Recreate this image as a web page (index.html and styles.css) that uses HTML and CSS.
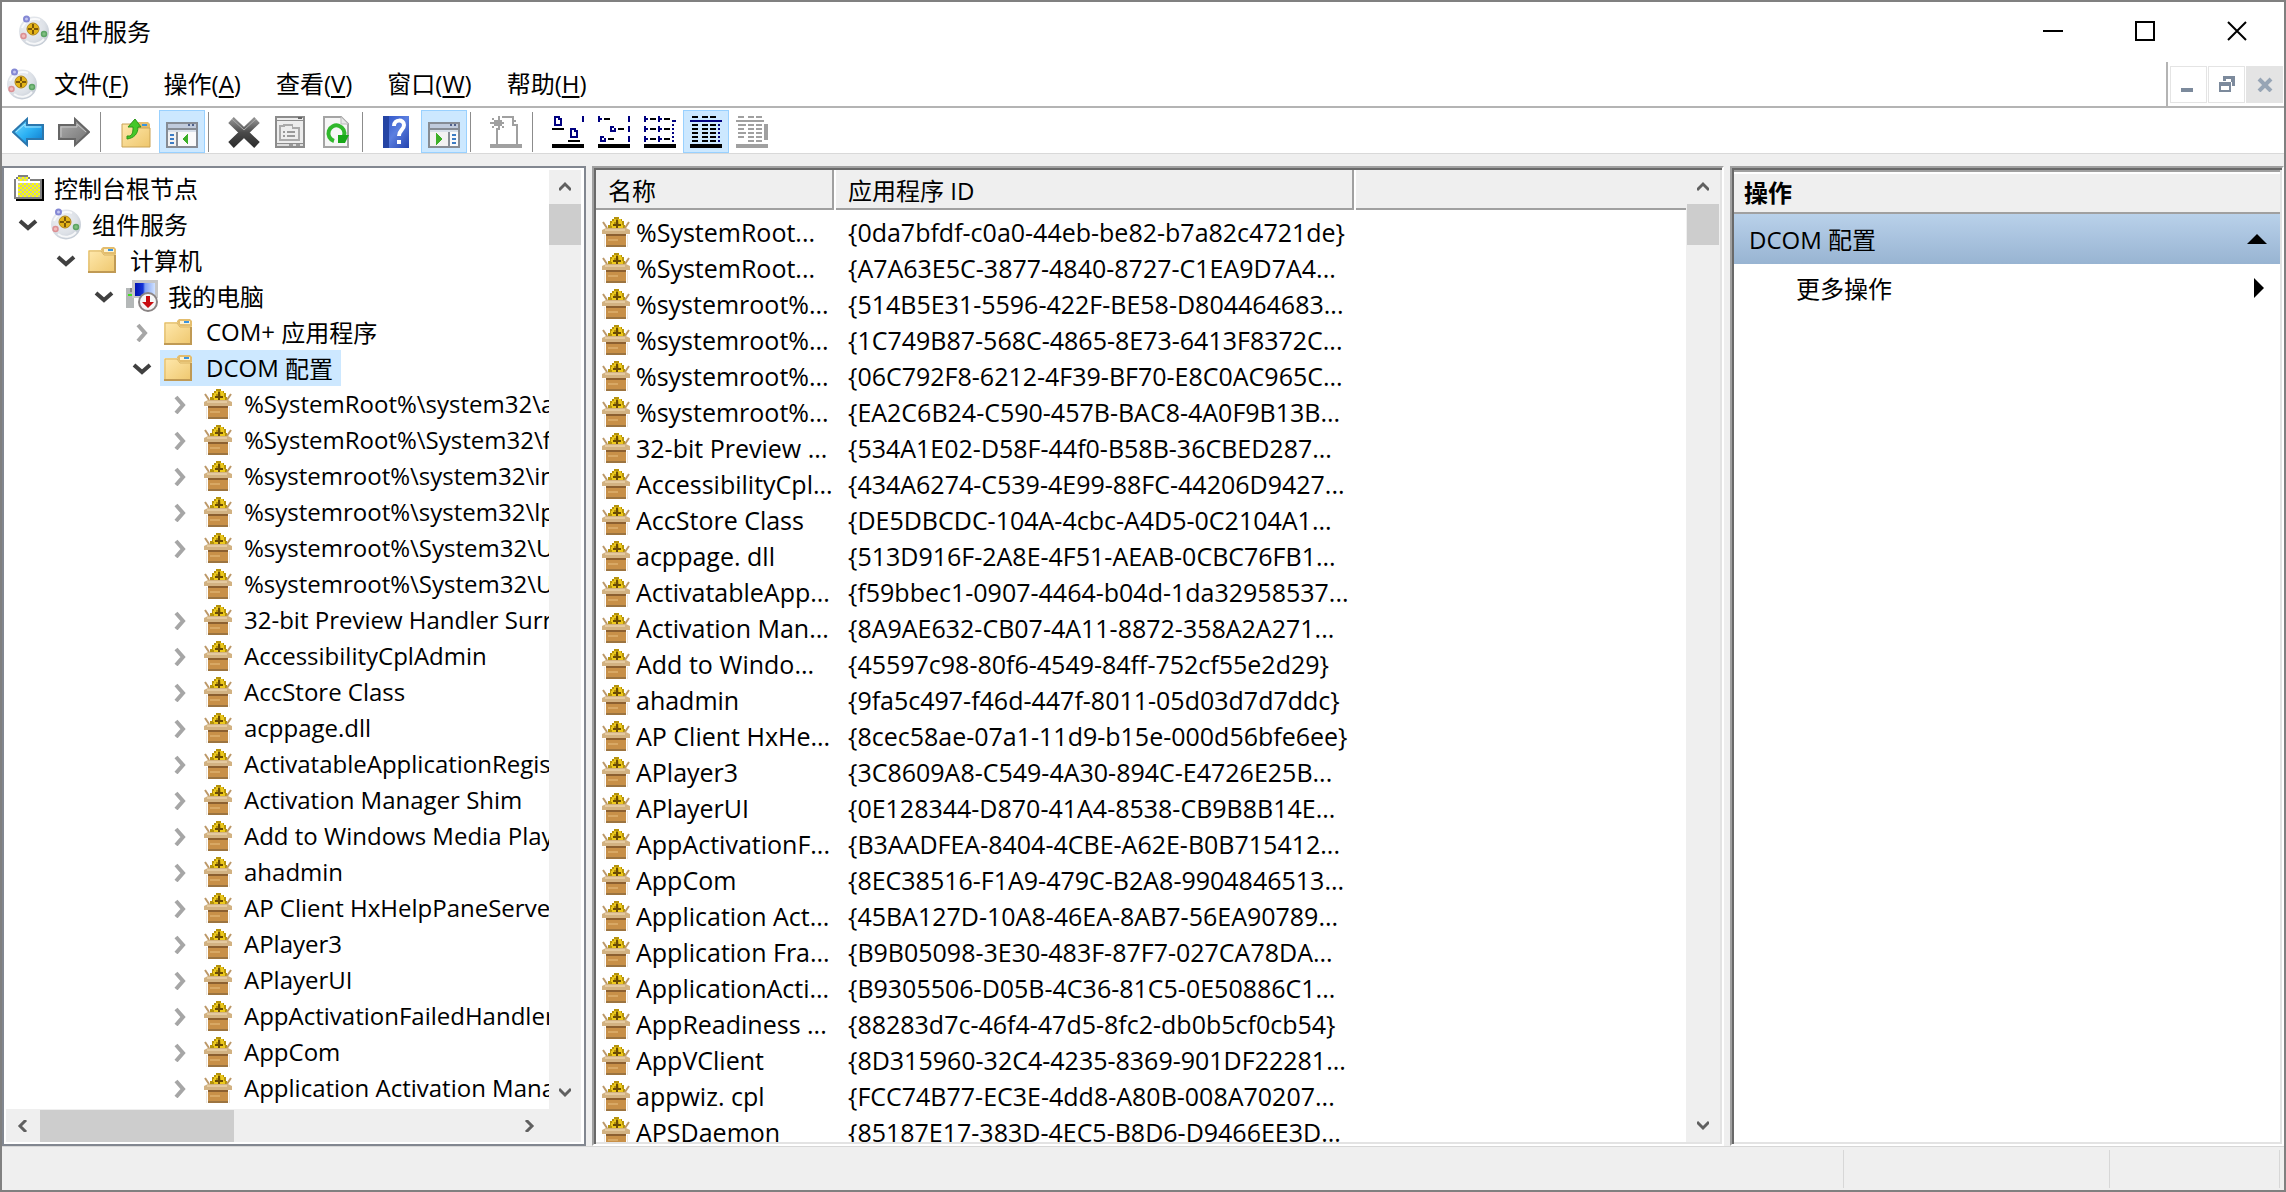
FILE: index.html
```
<!DOCTYPE html>
<html lang="zh-CN">
<head>
<meta charset="utf-8">
<title>组件服务</title>
<link rel="stylesheet" href="styles.css">
</head>
<body>
<svg class="sprite" aria-hidden="true">
  <defs>
    <radialGradient id="disc" cx="40%" cy="35%" r="65%"><stop offset="0" stop-color="#f0f2f5"/><stop offset="0.7" stop-color="#dde1e7"/><stop offset="1" stop-color="#c6cdd6"/></radialGradient>
    <linearGradient id="blue" x1="0" y1="0" x2="1" y2="1"><stop offset="0" stop-color="#7fdcff"/><stop offset="0.5" stop-color="#2db2f4"/><stop offset="1" stop-color="#0b74c8"/></linearGradient>
    <linearGradient id="gray" x1="0" y1="0" x2="1" y2="1"><stop offset="0" stop-color="#b0b0b0"/><stop offset="1" stop-color="#707070"/></linearGradient>
    <linearGradient id="manila" x1="0" y1="0" x2="1" y2="1"><stop offset="0" stop-color="#ffe9ae"/><stop offset="1" stop-color="#eec66c"/></linearGradient>
    <linearGradient id="cross" x1="0" y1="0" x2="0" y2="1"><stop offset="0" stop-color="#8d8d8d"/><stop offset="0.5" stop-color="#4a4a4a"/><stop offset="1" stop-color="#303030"/></linearGradient>
    <linearGradient id="help" x1="0" y1="0" x2="1" y2="1"><stop offset="0" stop-color="#2a4fc4"/><stop offset="0.5" stop-color="#5b7fe0"/><stop offset="1" stop-color="#2443ae"/></linearGradient>
    <linearGradient id="screen" x1="0" y1="0" x2="1" y2="0"><stop offset="0" stop-color="#0010b0"/><stop offset="0.4" stop-color="#1434d8"/><stop offset="0.5" stop-color="#7f9ff4"/><stop offset="1" stop-color="#d0e2ff"/></linearGradient>
    <pattern id="dither" width="4" height="4" patternUnits="userSpaceOnUse"><path d="M0 0h4v4H0z" fill="#ff0"/><path d="M0 0h2v2H0zM2 2h2v2H2z" fill="#c8c8a0"/></pattern>
  </defs>
  <symbol id="component" viewBox="0 0 32 32">
    <circle cx="16" cy="16.500" r="15" fill="url(#disc)"/>
    <path d="M4 13a14 14 0 0 1 18-8M26 24a13 13 0 0 1-18 2" fill="none" stroke="#fff" stroke-width="2" opacity=".8"/>
    <circle cx="8.500" cy="4" r="2.500" fill="#c4c6f0" stroke="#8488d4" stroke-width="2"/>
    <circle cx="5.500" cy="21" r="2.500" fill="#f0bcbc" stroke="#dc9094" stroke-width="1.500"/>
    <circle cx="26" cy="19" r="2.500" fill="#7fbf80" stroke="#5ca464" stroke-width="1.500"/>
    <circle cx="15" cy="14" r="6" fill="#e4b418" stroke="#b0861c"/>
    <path d="M15 9v4M15 15v4M10 14h4M16 14h4" stroke="#7c5808" stroke-width="2"/>
  </symbol>
  <symbol id="box" viewBox="0 0 28 30">
    <path d="M6 12V8h2V4h2V2h2V0h5v2h3v2h2v4h1v4z" fill="#b4920c"/>
    <path d="M10 4h2V2h2v3h-2v3h2v4h-4V9H9V6h1zM16 2h3v2h1v4h-3zM15 8h6v4h-6z" fill="#ecc81c"/>
    <path d="M14 3h2v4h3v2h-3v2h-2V9h-3V7h3z" fill="#6a4c04"/>
    <path d="M1 5l4 6M27 5l-4 6" stroke="#bc9868" stroke-width="2" fill="none"/>
    <path d="M4 11h20l4 2v4H0v-4z" fill="#d2b282"/>
    <path d="M3 12h20v2H3z" fill="#e4caa0"/>
    <path d="M4 18h20v12H4z" fill="#c89048"/>
    <path d="M4 17h20v2H4z" fill="#8c6030"/>
    <path d="M6 22h10v2H6z" fill="#d8a864"/>
    <path d="M4 28h20v2H4z" fill="#9c7440"/>
    <path d="M25 18h1v12h-1zM2 18h1v12H2z" fill="#ece6dc"/>
  </symbol>
  <symbol id="folder" viewBox="0 0 28 26">
    <path d="M13 6V2l2-2h11l2 2v8H13z" fill="#e3bd6e"/>
    <path d="M16 2h10v3H16z" fill="#fff3d0"/><path d="M20 2h5v2h-5z" fill="#3a94e0"/>
    <path d="M0 3h13l3 4h12v19H0z" fill="url(#manila)"/>
    <path d="M1 25V4h12l3 4h11" fill="none" stroke="#d9b465"/>
    <path d="M0 24h28v2H0zM26 8h2v18h-2z" fill="#c09a54"/>
  </symbol>
  <symbol id="root-folder" viewBox="0 0 30 26">
    <path d="M2 4h28v22H2z" fill="#000"/>
    <path d="M0 4h2V2h2V0h10v2h2v2h12v20H0z" fill="#808080"/>
    <path d="M2 4h2V2h10v2h2v2h10v16H2z" fill="#fff"/>
    <path d="M4 4V2h10v4H4zM4 8h22v14H4z" fill="url(#dither)"/>
  </symbol>
  <symbol id="computer" viewBox="0 0 32 32">
    <path d="M0 8h8v20H0z" fill="#b4b8b8"/><path d="M2 14h5v2H2z" fill="#40e020"/><path d="M4 8h3v4H4z" fill="#888"/>
    <path d="M6 0h26v18H6z" fill="#c6c6c6"/><path d="M9 3h20v13H9z" fill="url(#screen)"/>
    <circle cx="22" cy="22" r="9" fill="#f6f6f6" stroke="#8a8484" stroke-width="2"/>
    <path d="M20 16h4v6h4l-6 6-6-6h4z" fill="#c80c10"/>
  </symbol>
  <symbol id="open" viewBox="0 0 20 20"><path d="M2 7l8 7 8-7" fill="none" stroke="#404040" stroke-width="4"/></symbol>
  <symbol id="closed" viewBox="0 0 20 20"><path d="M6 3l7 8-7 8" fill="none" stroke="#a6a6a6" stroke-width="4"/></symbol>
  <symbol id="arrow" viewBox="0 0 12 12"><path d="M0 9l6-6 6 6" fill="none" stroke="#606060" stroke-width="3"/></symbol>
</svg>

<div class="window">
  <header class="titlebar">
    <svg class="app-icon"><use href="#component"/></svg>
    <h1>组件服务</h1>
    <div class="window-buttons">
      <button aria-label="最小化"><svg viewBox="0 0 20 20"><path d="M0 10h20" stroke="#000" stroke-width="2"/></svg></button>
      <button aria-label="最大化"><svg viewBox="0 0 20 20"><path d="M1 1h18v18H1z" fill="none" stroke="#000" stroke-width="2"/></svg></button>
      <button aria-label="关闭"><svg viewBox="0 0 20 20"><path d="M1 1l18 18M19 1L1 19" stroke="#000" stroke-width="2"/></svg></button>
    </div>
  </header>

  <div class="menubar">
    <svg class="app-icon"><use href="#component"/></svg>
    <nav class="menus">
      <button>文件<span class="latin">(<u>F</u>)</span></button>
      <button>操作<span class="latin">(<u>A</u>)</span></button>
      <button>查看<span class="latin">(<u>V</u>)</span></button>
      <button>窗口<span class="latin">(<u>W</u>)</span></button>
      <button>帮助<span class="latin">(<u>H</u>)</span></button>
    </nav>
    <div class="child-buttons">
      <button aria-label="最小化子窗口"><svg viewBox="0 0 16 16"><path d="M0 12h12v4H0z" fill="#7c8a9c"/></svg></button>
      <button aria-label="还原子窗口"><svg viewBox="0 0 16 16"><path d="M4 0h12v10h-3V6h-1V3H7v2H4z" fill="#7c8a9c"/><path d="M0 6h12v10H0zM2 10v4h8v-4z" fill="#7c8a9c" fill-rule="evenodd"/></svg></button>
      <button class="disabled" aria-label="关闭子窗口"><svg viewBox="0 0 16 16"><path d="M2 3l12 12M14 3L2 15" stroke="#97a5b5" stroke-width="4"/></svg></button>
    </div>
  </div>

  <div class="toolbar" role="toolbar">
    <button aria-label="后退"><svg viewBox="0 0 32 32"><path d="M1 16L15 3v6h16v14H15v6z" fill="url(#blue)" stroke="#2b77ae" stroke-width="2"/><path d="M4 16l9-8v3h16" fill="none" stroke="#a8e6ff"/></svg></button>
    <button aria-label="前进"><svg viewBox="0 0 32 32"><path d="M31 16L17 3v6H1v14h16v6z" fill="url(#gray)" stroke="#666" stroke-width="2"/><path d="M28 16l-9-8v3H3v10" fill="none" stroke="#c6c6c6"/></svg></button>
    <span class="separator"></span>
    <button aria-label="向上一级"><svg viewBox="0 0 32 32"><path d="M18 10V6h10l2 2v8H18z" fill="#e3bd6e"/><path d="M22 8h5v2h-5z" fill="#3a94e0"/><path d="M2 8h14l3 4h11v19H2z" fill="url(#manila)" stroke="#c9a255"/><path d="M7 23v-3h3c3-2 3-5 3-9H8L15 3l6 8h-3c0 7-4 11-11 12z" fill="#44c828" stroke="#2c9418"/></svg></button>
    <button class="active" aria-label="显示控制台树"><svg viewBox="0 0 32 32" class="crisp"><path d="M0 6h32v26H0z" fill="#868c94"/><path d="M2 8h28v4H2z" fill="#c0cbdc"/><path d="M2 14h28v2H2z" fill="#d8e0ea"/><path d="M22 8h2v2h-2zM26 8h2v2h-2z" fill="#50628c"/><path d="M2 16h8v14H2z" fill="#f2f2f2"/><path d="M12 16h18v14H12z" fill="#fafafa"/><path d="M4 18h4v2H4zM4 22h4v2H4zM4 26h4v2H4z" fill="#3c7cc4"/><path d="M22 17v12l-6-6z" fill="#3cb028"/></svg></button>
    <span class="separator"></span>
    <button aria-label="删除"><svg viewBox="0 0 32 32"><path d="M3 4l26 25M29 4L3 29" stroke="url(#cross)" stroke-width="8"/><path d="M4 3l12 11L28 3" fill="none" stroke="#aaa"/></svg></button>
    <button aria-label="属性"><svg viewBox="0 0 32 32" class="crisp"><path d="M1 0h30v32H1z" fill="#8c8c8c"/><path d="M3 2h26v2H3zM3 5h26v22H3z" fill="#ededed"/><path d="M24 1h4v2h-4z" fill="#666"/><path d="M3 28h26v2H3z" fill="#ddd"/><path d="M15 28h4v2h-4zM22 28h4v2h-4z" fill="#999"/><path d="M5 9h4V8h10v3h7v14H5zM7 11v12h17V13h-6v-3h-7v1z" fill="#aaa" fill-rule="evenodd"/><path d="M9 15h2v2H9zM13 15h8v2h-8zM9 19h2v2H9zM13 19h8v2h-8z" fill="#999"/></svg></button>
    <button aria-label="刷新"><svg viewBox="0 0 32 32"><path d="M4 1h17l7 7v23H4z" fill="#f6f6f6" stroke="#a4a4a4" stroke-width="2"/><path d="M21 1v7h7" fill="#e8e8e8" stroke="#bbb"/><path d="M14 25a8 8 0 1 1 10-5" fill="none" stroke="#30b82c" stroke-width="4"/><path d="M18 19h11l-4 8h-7z" fill="#18a818"/></svg></button>
    <span class="separator"></span>
    <button aria-label="帮助"><svg viewBox="0 0 32 32"><path d="M1 0h26v32H1z" fill="url(#help)"/><path d="M1 0h6v32H1z" fill="#2444a4"/><path d="M12 10c0-7 10-7 10-1 0 5-5 5-5 11" fill="none" stroke="#fff" stroke-width="4"/><path d="M15 24h4v4h-4z" fill="#fff"/></svg></button>
    <button class="active" aria-label="显示操作窗格"><svg viewBox="0 0 32 32" class="crisp"><path d="M0 6h32v26H0z" fill="#868c94"/><path d="M2 8h28v4H2z" fill="#c0cbdc"/><path d="M2 14h28v2H2z" fill="#d8e0ea"/><path d="M22 8h2v2h-2zM26 8h2v2h-2z" fill="#50628c"/><path d="M2 16h18v14H2z" fill="#f2f2f2"/><path d="M22 16h8v14h-8z" fill="#fafafa"/><path d="M24 18h4v2h-4zM24 22h4v2h-4zM24 26h4v2h-4z" fill="#3c7cc4"/><path d="M8 17v12l6-6z" fill="#3cb028"/></svg></button>
    <span class="separator"></span>
    <button aria-label="新建窗口"><svg viewBox="0 0 16 16" class="crisp"><path d="M0 14h16v2H0zM3 6h1v8H3zM13 4h1v10h-1zM6 0h6v1H6zM11 1h1v3h2v1h-3zM12 2h1v1h-1zM1 1h1v1H1zM4 0h1v2H4zM2 2h4v3H2zM0 3h7v1H0zM1 5h1v1H1zM4 5h1v2H4zM6 5h1v1H6z" fill="#a0a0a0"/></svg></button>
    <span class="separator"></span>
    <button aria-label="大图标"><svg viewBox="0 0 16 16" class="crisp"><path d="M1 0h3v1h1v4H1zM2 1v3h2V2H3V1zM9 6h3v1h1v4H9zM10 7v3h2V8h-1V7zM15 0h1v3h-1z" fill="#000080" fill-rule="evenodd"/><path d="M0 6h6v1H0zM8 12h6v1H8zM0 14h16v2H0z"/></svg></button>
    <button aria-label="小图标"><svg viewBox="0 0 16 16" class="crisp"><path d="M0 0h1v1h1v1H1v1H0zM6 5h2v1h1v2H6zM7 6v1h1V6zM1 10h2v1h1v2H1zM2 11v1h1v-1zM15 0h1v3h-1zM15 5h1v3h-1zM15 10h1v3h-1z" fill="#000080" fill-rule="evenodd"/><path d="M3 1h3v1H3zM10 6h3v1h-3zM5 11h3v1H5zM0 14h16v2H0z"/></svg></button>
    <button aria-label="列表"><svg viewBox="0 0 16 16" class="crisp"><path d="M0 0h1v1h1v1H1v1H0zM0 5h1v1h1v1H1v1H0zM0 10h1v1h1v1H1v1H0zM7 0h1v1h1v1H8v1H7zM7 5h1v1h1v1H8v1H7zM7 10h1v1h1v1H8v1H7zM14 2h2v1h-2zM14 4h1v1h-1zM14 6h1v1h-1zM14 8h1v1h-1zM14 10h1v1h-1zM14 12h1v1h-1z" fill="#000080"/><path d="M3 1h3v1H3zM10 1h3v1h-3zM3 6h3v1H3zM10 6h3v1h-3zM3 11h3v1H3zM10 11h3v1h-3zM0 14h16v2H0z"/></svg></button>
    <button class="active" aria-label="详细信息"><svg viewBox="0 0 16 16" class="crisp"><path d="M0 2h16v1H0zM14 4h1v1h-1zM14 6h1v1h-1zM14 8h1v1h-1zM14 10h1v1h-1zM14 12h1v1h-1z" fill="#000080"/><path d="M2.500 0v1M7.500 0v1M11.500 0v1M2.500 4v9M7.500 4v9M11.500 4v9" stroke="#000" stroke-width="3" stroke-dasharray="1 1"/><path d="M0 14h16v2H0z"/></svg></button>
    <button aria-label="筛选列表"><svg viewBox="0 0 16 16" class="crisp"><path d="M0 2h14v1H0zM14 4h2v8h-2zM0 14h16v2H0zM1 4h4v1H1zM1 6h3v1H1zM1 8h4v1H1zM1 10h3v1H1z" fill="#a0a0a0"/><path d="M2.500 0v1M7.500 0v1M11.500 0v1M7.500 4v9M11.500 4v9" stroke="#a0a0a0" stroke-width="3" stroke-dasharray="1 1"/></svg></button>
  </div>

  <main class="panes">
    <section class="tree-pane" aria-label="控制台树">
      <div class="tree latin">
        <div class="row"><span class="label"><span class="slot"><svg class="wide"><use href="#root-folder"/></svg></span><span class="han">控制台根节点</span></span></div>
        <ul>
          <li><div class="row"><button class="toggle" aria-label="折叠"><svg><use href="#open"/></svg></button><span class="label"><span class="slot"><svg class="big"><use href="#component"/></svg></span><span class="han">组件服务</span></span></div>
          <ul>
            <li><div class="row"><button class="toggle" aria-label="折叠"><svg><use href="#open"/></svg></button><span class="label"><span class="slot"><svg class="folder"><use href="#folder"/></svg></span><span class="han">计算机</span></span></div>
            <ul>
              <li><div class="row"><button class="toggle" aria-label="折叠"><svg><use href="#open"/></svg></button><span class="label"><span class="slot"><svg class="big"><use href="#computer"/></svg></span><span class="han">我的电脑</span></span></div>
              <ul>
                <li><div class="row"><button class="toggle" aria-label="展开"><svg><use href="#closed"/></svg></button><span class="label"><span class="slot"><svg class="folder"><use href="#folder"/></svg></span>COM+ <span class="han">应用程序</span></span></div></li>
                <li><div class="row"><button class="toggle" aria-label="折叠"><svg><use href="#open"/></svg></button><span class="label selected"><span class="slot"><svg class="folder"><use href="#folder"/></svg></span>DCOM <span class="han">配置</span></span></div>
                <ul>
                  <li class="row"><button class="toggle" aria-label="展开"><svg><use href="#closed"/></svg></button><span class="label"><span class="slot"><svg class="box"><use href="#box"/></svg></span>%SystemRoot%\system32\a</span></li>
                  <li class="row"><button class="toggle" aria-label="展开"><svg><use href="#closed"/></svg></button><span class="label"><span class="slot"><svg class="box"><use href="#box"/></svg></span>%SystemRoot%\System32\f</span></li>
                  <li class="row"><button class="toggle" aria-label="展开"><svg><use href="#closed"/></svg></button><span class="label"><span class="slot"><svg class="box"><use href="#box"/></svg></span>%systemroot%\system32\in</span></li>
                  <li class="row"><button class="toggle" aria-label="展开"><svg><use href="#closed"/></svg></button><span class="label"><span class="slot"><svg class="box"><use href="#box"/></svg></span>%systemroot%\system32\lp</span></li>
                  <li class="row"><button class="toggle" aria-label="展开"><svg><use href="#closed"/></svg></button><span class="label"><span class="slot"><svg class="box"><use href="#box"/></svg></span>%systemroot%\System32\U</span></li>
                  <li class="row"><span class="toggle"></span><span class="label"><span class="slot"><svg class="box"><use href="#box"/></svg></span>%systemroot%\System32\U</span></li>
                  <li class="row"><button class="toggle" aria-label="展开"><svg><use href="#closed"/></svg></button><span class="label"><span class="slot"><svg class="box"><use href="#box"/></svg></span>32-bit Preview Handler Surro</span></li>
                  <li class="row"><button class="toggle" aria-label="展开"><svg><use href="#closed"/></svg></button><span class="label"><span class="slot"><svg class="box"><use href="#box"/></svg></span>AccessibilityCplAdmin</span></li>
                  <li class="row"><button class="toggle" aria-label="展开"><svg><use href="#closed"/></svg></button><span class="label"><span class="slot"><svg class="box"><use href="#box"/></svg></span>AccStore Class</span></li>
                  <li class="row"><button class="toggle" aria-label="展开"><svg><use href="#closed"/></svg></button><span class="label"><span class="slot"><svg class="box"><use href="#box"/></svg></span>acppage.dll</span></li>
                  <li class="row"><button class="toggle" aria-label="展开"><svg><use href="#closed"/></svg></button><span class="label"><span class="slot"><svg class="box"><use href="#box"/></svg></span>ActivatableApplicationRegist</span></li>
                  <li class="row"><button class="toggle" aria-label="展开"><svg><use href="#closed"/></svg></button><span class="label"><span class="slot"><svg class="box"><use href="#box"/></svg></span>Activation Manager Shim</span></li>
                  <li class="row"><button class="toggle" aria-label="展开"><svg><use href="#closed"/></svg></button><span class="label"><span class="slot"><svg class="box"><use href="#box"/></svg></span>Add to Windows Media Playe</span></li>
                  <li class="row"><button class="toggle" aria-label="展开"><svg><use href="#closed"/></svg></button><span class="label"><span class="slot"><svg class="box"><use href="#box"/></svg></span>ahadmin</span></li>
                  <li class="row"><button class="toggle" aria-label="展开"><svg><use href="#closed"/></svg></button><span class="label"><span class="slot"><svg class="box"><use href="#box"/></svg></span>AP Client HxHelpPaneServe</span></li>
                  <li class="row"><button class="toggle" aria-label="展开"><svg><use href="#closed"/></svg></button><span class="label"><span class="slot"><svg class="box"><use href="#box"/></svg></span>APlayer3</span></li>
                  <li class="row"><button class="toggle" aria-label="展开"><svg><use href="#closed"/></svg></button><span class="label"><span class="slot"><svg class="box"><use href="#box"/></svg></span>APlayerUI</span></li>
                  <li class="row"><button class="toggle" aria-label="展开"><svg><use href="#closed"/></svg></button><span class="label"><span class="slot"><svg class="box"><use href="#box"/></svg></span>AppActivationFailedHandler</span></li>
                  <li class="row"><button class="toggle" aria-label="展开"><svg><use href="#closed"/></svg></button><span class="label"><span class="slot"><svg class="box"><use href="#box"/></svg></span>AppCom</span></li>
                  <li class="row"><button class="toggle" aria-label="展开"><svg><use href="#closed"/></svg></button><span class="label"><span class="slot"><svg class="box"><use href="#box"/></svg></span>Application Activation Manag</span></li>
                </ul></li>
              </ul></li>
            </ul></li>
          </ul></li>
        </ul>
      </div>
      <div class="vscroll"><svg class="up"><use href="#arrow"/></svg><span class="thumb"></span><svg class="down"><use href="#arrow"/></svg></div>
      <div class="hscroll"><svg class="left"><use href="#arrow"/></svg><span class="thumb"></span><svg class="right"><use href="#arrow"/></svg></div>
    </section>

    <section class="list-pane sunken" aria-label="DCOM 配置">
      <div class="list">
        <table>
          <colgroup><col class="col-name"><col class="col-id"><col></colgroup>
          <thead><tr><th><div>名称</div></th><th><div>应用程序<span class="latin"> ID</span></div></th><th><div class="last"></div></th></tr></thead>
          <tbody>
            <tr><td><svg class="box"><use href="#box"/></svg>%SystemRoot...</td><td>{0da7bfdf-c0a0-44eb-be82-b7a82c4721de}</td><td></td></tr>
            <tr><td><svg class="box"><use href="#box"/></svg>%SystemRoot...</td><td>{A7A63E5C-3877-4840-8727-C1EA9D7A4...</td><td></td></tr>
            <tr><td><svg class="box"><use href="#box"/></svg>%systemroot%...</td><td>{514B5E31-5596-422F-BE58-D804464683...</td><td></td></tr>
            <tr><td><svg class="box"><use href="#box"/></svg>%systemroot%...</td><td>{1C749B87-568C-4865-8E73-6413F8372C...</td><td></td></tr>
            <tr><td><svg class="box"><use href="#box"/></svg>%systemroot%...</td><td>{06C792F8-6212-4F39-BF70-E8C0AC965C...</td><td></td></tr>
            <tr><td><svg class="box"><use href="#box"/></svg>%systemroot%...</td><td>{EA2C6B24-C590-457B-BAC8-4A0F9B13B...</td><td></td></tr>
            <tr><td><svg class="box"><use href="#box"/></svg>32-bit Preview ...</td><td>{534A1E02-D58F-44f0-B58B-36CBED287...</td><td></td></tr>
            <tr><td><svg class="box"><use href="#box"/></svg>AccessibilityCpl...</td><td>{434A6274-C539-4E99-88FC-44206D9427...</td><td></td></tr>
            <tr><td><svg class="box"><use href="#box"/></svg>AccStore Class</td><td>{DE5DBCDC-104A-4cbc-A4D5-0C2104A1...</td><td></td></tr>
            <tr><td><svg class="box"><use href="#box"/></svg>acppage. dll</td><td>{513D916F-2A8E-4F51-AEAB-0CBC76FB1...</td><td></td></tr>
            <tr><td><svg class="box"><use href="#box"/></svg>ActivatableApp...</td><td>{f59bbec1-0907-4464-b04d-1da32958537...</td><td></td></tr>
            <tr><td><svg class="box"><use href="#box"/></svg>Activation Man...</td><td>{8A9AE632-CB07-4A11-8872-358A2A271...</td><td></td></tr>
            <tr><td><svg class="box"><use href="#box"/></svg>Add to Windo...</td><td>{45597c98-80f6-4549-84ff-752cf55e2d29}</td><td></td></tr>
            <tr><td><svg class="box"><use href="#box"/></svg>ahadmin</td><td>{9fa5c497-f46d-447f-8011-05d03d7d7ddc}</td><td></td></tr>
            <tr><td><svg class="box"><use href="#box"/></svg>AP Client HxHe...</td><td>{8cec58ae-07a1-11d9-b15e-000d56bfe6ee}</td><td></td></tr>
            <tr><td><svg class="box"><use href="#box"/></svg>APlayer3</td><td>{3C8609A8-C549-4A30-894C-E4726E25B...</td><td></td></tr>
            <tr><td><svg class="box"><use href="#box"/></svg>APlayerUI</td><td>{0E128344-D870-41A4-8538-CB9B8B14E...</td><td></td></tr>
            <tr><td><svg class="box"><use href="#box"/></svg>AppActivationF...</td><td>{B3AADFEA-8404-4CBE-A62E-B0B715412...</td><td></td></tr>
            <tr><td><svg class="box"><use href="#box"/></svg>AppCom</td><td>{8EC38516-F1A9-479C-B2A8-9904846513...</td><td></td></tr>
            <tr><td><svg class="box"><use href="#box"/></svg>Application Act...</td><td>{45BA127D-10A8-46EA-8AB7-56EA90789...</td><td></td></tr>
            <tr><td><svg class="box"><use href="#box"/></svg>Application Fra...</td><td>{B9B05098-3E30-483F-87F7-027CA78DA...</td><td></td></tr>
            <tr><td><svg class="box"><use href="#box"/></svg>ApplicationActi...</td><td>{B9305506-D05B-4C36-81C5-0E50886C1...</td><td></td></tr>
            <tr><td><svg class="box"><use href="#box"/></svg>AppReadiness ...</td><td>{88283d7c-46f4-47d5-8fc2-db0b5cf0cb54}</td><td></td></tr>
            <tr><td><svg class="box"><use href="#box"/></svg>AppVClient</td><td>{8D315960-32C4-4235-8369-901DF22281...</td><td></td></tr>
            <tr><td><svg class="box"><use href="#box"/></svg>appwiz. cpl</td><td>{FCC74B77-EC3E-4dd8-A80B-008A70207...</td><td></td></tr>
            <tr><td><svg class="box"><use href="#box"/></svg>APSDaemon</td><td>{85187E17-383D-4EC5-B8D6-D9466EE3D...</td><td></td></tr>
          </tbody>
        </table>
      </div>
      <div class="vscroll"><svg class="up"><use href="#arrow"/></svg><span class="thumb"></span><svg class="down"><use href="#arrow"/></svg></div>
    </section>

    <aside class="actions sunken">
      <h2>操作</h2>
      <button class="group"><span><span class="latin">DCOM </span>配置</span><svg viewBox="0 0 20 10"><path d="M0 10L10 0l10 10z"/></svg></button>
      <button class="action"><span>更多操作</span><svg viewBox="0 0 10 20"><path d="M0 0l10 10L0 20z"/></svg></button>
    </aside>
  </main>

  <footer class="status"><span class="message"></span><span class="part"></span><span class="part short"></span></footer>
</div>
</body>
</html>
```
FILE: styles.css
```
* { box-sizing: border-box; }

body {
  margin: 0;
  color: #000;
  font: 24px/36px "Noto Sans CJK SC", sans-serif;
}

button {
  margin: 0;
  padding: 0;
  border: 0;
  background: none;
  color: inherit;
  font: inherit;
  line-height: inherit;
}

svg { display: block; flex: none; }
ul { margin: 0; padding: 0; list-style: none; }

.sprite { position: absolute; width: 0; height: 0; }
.crisp { shape-rendering: crispEdges; }
.latin { font-family: "Open Sans", "Noto Sans", sans-serif; font-size: 24px; }
.han { font-family: "Noto Sans CJK SC", sans-serif; }

.window {
  display: flex;
  flex-direction: column;
  height: 100vh;
  border: 2px solid #808080;
  background: #efefef;
}

/* Title bar */
.titlebar {
  display: flex;
  align-items: center;
  height: 60px;
  flex: none;
  padding: 0 1px 2px 16px;
  background: #fff;
}
.titlebar h1 { flex: 1; margin: 0 0 0 5px; font-size: 24px; font-weight: 400; }
.app-icon { width: 32px; height: 32px; }
.window-buttons { display: flex; height: 56px; }
.window-buttons button { display: grid; place-items: center; width: 92px; }
.window-buttons svg { width: 20px; height: 20px; }

/* Menu bar */
.menubar {
  display: flex;
  align-items: center;
  height: 46px;
  flex: none;
  padding-left: 4px;
  border-bottom: 2px solid #b4b4b4;
  background: #fff;
}
.menus { display: flex; flex: 1; gap: 35px; margin-left: 16px; padding-bottom: 2px; }
.menus u { text-underline-offset: 3px; }
.child-buttons {
  display: flex;
  align-self: stretch;
  align-items: center;
  gap: 1px;
  padding: 0 1px 0 2px;
  border-left: 2px solid #b4b4b4;
}
.child-buttons button {
  display: grid;
  place-items: center;
  width: 37px;
  height: 37px;
  border: 1px solid #e4e4e4;
}
.child-buttons .disabled { background: #e4e4e4; }
.child-buttons svg { width: 16px; height: 16px; }

/* Toolbar */
.toolbar {
  display: flex;
  align-items: center;
  height: 46px;
  flex: none;
  padding: 2px 0 0 3px;
  border-bottom: 1px solid #d9d9d9;
  background: #fff;
}
.toolbar button { display: grid; place-items: center; width: 46px; height: 43px; border: 1px solid transparent; }
.toolbar .active { border-color: #99d1ff; background: #cce8ff; }
.toolbar svg { width: 32px; height: 32px; }
.separator { width: 1px; height: 40px; margin: 0 12px 0 3px; background: #8c8c8c; }

/* Panes */
.panes {
  display: grid;
  grid-template-columns: 584px minmax(0, 1fr) 554px;
  grid-template-rows: minmax(0, 1fr);
  gap: 6px;
  flex: 1;
  min-height: 0;
  padding-top: 12px;
}

.tree-pane {
  display: grid;
  grid-template-columns: minmax(0, 1fr) 32px;
  grid-template-rows: minmax(0, 1fr) 33px;
  padding: 2px 3px 2px 2px;
  border: 2px solid #828790;
  background: #fff;
}
.tree { overflow: hidden; padding-left: 2px; white-space: nowrap; }
.tree ul ul { padding-left: 38px; }
.row { display: flex; height: 36px; }
.toggle { display: grid; place-items: center; width: 38px; height: 36px; flex: none; padding-left: 2px; }
.toggle svg { width: 20px; height: 20px; }
.label { display: flex; align-items: center; padding: 0 8px 0 4px; white-space: pre; }
.selected { background: #cde8ff; }
.slot { display: grid; align-items: center; width: 42px; }
.big { width: 32px; height: 32px; }
.wide { width: 30px; height: 26px; margin-left: 2px; }
.folder { width: 28px; height: 26px; }
.box { width: 28px; height: 30px; }
.slot .box { margin-left: 2px; }

/* Scroll bars */
.vscroll, .hscroll { display: flex; align-items: center; background: #efefef; }
.vscroll { flex-direction: column; }
.vscroll svg, .hscroll svg { width: 12px; height: 12px; margin: 11px; }
.vscroll .thumb { width: 32px; height: 41px; background: #cdcdcd; }
.vscroll .down { margin-top: auto; transform: rotate(180deg); }
.hscroll { grid-column: 1 / 3; }
.hscroll .thumb { width: 194px; height: 32px; background: #cdcdcd; }
.hscroll .left { transform: rotate(-90deg); }
.hscroll .right { margin: 0 46px 0 auto; transform: rotate(90deg); }

/* Result list */
.sunken {
  border: 2px solid;
  border-color: #a0a0a0 #fff #fff #a0a0a0;
  box-shadow: inset 2px 2px #696969, inset -2px -2px #e3e3e3;
  padding: 2px;
  background: #fff;
}
.list-pane { display: flex; }
.list { flex: 1; min-width: 0; overflow: hidden; }
.list table { width: 100%; border-collapse: collapse; table-layout: fixed; }
.col-name { width: 240px; }
.col-id { width: 520px; }
.list th { padding: 0 0 4px; font-weight: 400; text-align: left; }
.list th div {
  height: 40px;
  margin-right: 2px;
  padding-left: 12px;
  border: solid #a0a0a0;
  border-width: 0 2px 2px 0;
  background: #efefef;
  line-height: 40px;
}
.list th .last { margin-right: 0; border-right: 0; }
.list td {
  height: 36px;
  padding: 0 0 0 12px;
  font: 25px/36px "Open Sans", "Noto Sans", sans-serif;
  white-space: nowrap;
}
.list td:first-child { display: flex; align-items: center; gap: 6px; padding-left: 6px; }

/* Actions pane */
.actions { display: flex; flex-direction: column; }
.actions h2 {
  height: 44px;
  flex: none;
  margin: 0;
  padding-left: 10px;
  border: solid #a0a0a0;
  border-width: 2px 0;
  box-shadow: inset 0 2px #fff, 0 2px #fff;
  background: #efefef;
  font-size: 24px;
  font-weight: 700;
  line-height: 40px;
}
.actions button { display: flex; align-items: center; justify-content: space-between; text-align: left; }
.actions .group {
  height: 50px;
  padding: 0 13px 0 15px;
  background: linear-gradient(#b9d1ea, #98b4d2);
}
.actions .group svg { width: 20px; height: 10px; }
.actions .action { height: 48px; padding: 0 16px 0 62px; }
.actions .action svg { width: 10px; height: 20px; }

/* Status bar */
.status {
  display: flex;
  height: 44px;
  flex: none;
  padding: 3px 4px 2px 0;
  border-top: 1px solid #d7d7d7;
}
.status span { border-right: 1px solid #d7d7d7; }
.message { flex: 1; }
.part { width: 266px; }
.short { width: 170px; }
```
